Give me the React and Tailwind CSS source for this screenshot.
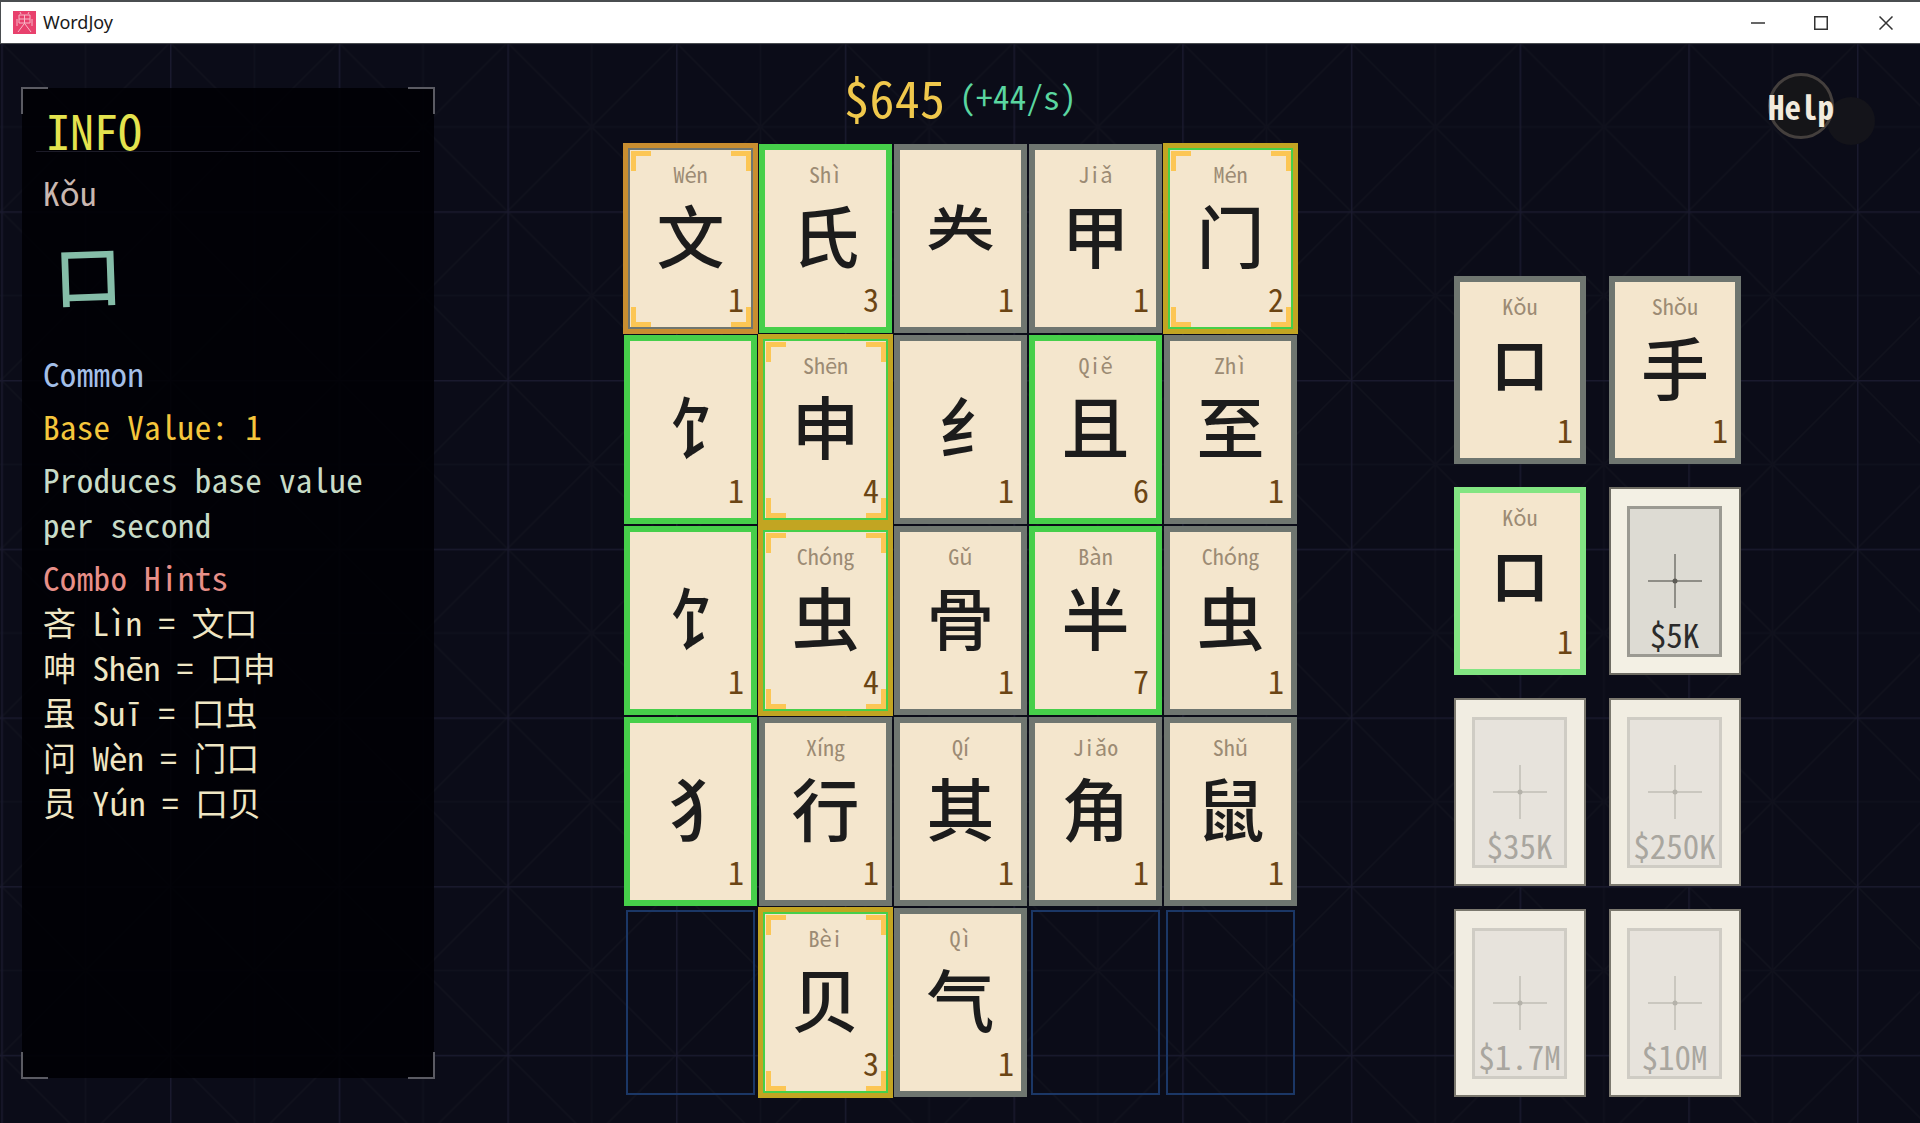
const MONO = "font-['Noto_Sans_Mono_CJK_SC','Noto_Sans_CJK_SC',monospace]";

const rows = [
  [["Wén","文",1,"gold"],["Shì","氏",3,"green"],["","龹",1,"grey"],["Jiǎ","甲",1,"grey"],["Mén","门",2,"both"]],
  [["","饣",1,"green",true],["Shēn","申",4,"both"],["","纟",1,"grey",true],["Qiě","且",6,"green"],["Zhì","至",1,"grey"]],
  [["","饣",1,"green",true],["Chóng","虫",4,"both"],["Gǔ","骨",1,"grey"],["Bàn","半",7,"green"],["Chóng","虫",1,"grey"]],
  [["","犭",1,"green",true],["Xíng","行",1,"grey"],["Qí","其",1,"grey"],["Jiǎo","角",1,"grey"],["Shǔ","鼠",1,"grey"]],
  [null,["Bèi","贝",3,"both"],["Qì","气",1,"grey"],null,null],
];

// ì and ī come from the proportional fallback face; hold them to the half-width cell.
function Py({ text }) {
  return text.split(/([ìī])/).map((part, i) =>
    part === "ì" || part === "ī" ? (
      <span key={i} className="inline-block w-[0.5em] text-center">{part}</span>
    ) : (
      part
    )
  );
}

function Brackets() {
  const arm = "absolute bg-[#fcc654]";
  return (
    <div className="absolute left-[7px] right-[6px] top-[7px] bottom-[6px]">
      <div className={`${arm} left-0 top-0 w-5 h-[5px]`} />
      <div className={`${arm} left-0 top-0 w-[5px] h-5`} />
      <div className={`${arm} right-0 top-0 w-5 h-[5px]`} />
      <div className={`${arm} right-0 top-0 w-[5px] h-5`} />
      <div className={`${arm} left-0 bottom-0 w-5 h-[5px]`} />
      <div className={`${arm} left-0 bottom-0 w-[5px] h-5`} />
      <div className={`${arm} right-0 bottom-0 w-5 h-[5px]`} />
      <div className={`${arm} right-0 bottom-0 w-[5px] h-5`} />
    </div>
  );
}

function Card({ py, ch, n, kind, radical, small }) {
  const border =
    kind === "green" || kind === "both"
      ? "border-[#46cf4a]"
      : kind === "light"
      ? "border-[#82e582]"
      : "border-[#6f7670]";
  const glyph = small
    ? "text-[56px] leading-[76px] -translate-y-[4px] font-semibold"
    : radical
    ? "text-[68px] leading-[76px] translate-x-[12px] font-medium"
    : "text-[68px] leading-[76px] font-medium";
  return (
    <div className={`relative border-[6px] ${border} bg-[#f4e6cd] ${MONO} flex flex-col items-center`}>
      <div className="h-[46px] pt-[8px] text-[22px] leading-[30px] text-[#9c8b74]"><Py text={py} /></div>
      <div className={`${glyph} text-[#1c1c1c] font-['Noto_Sans_CJK_SC',sans-serif]`}>{ch}</div>
      <div className="absolute right-[7px] bottom-[11px] text-[32px] leading-[36px] text-[#6b4514]">{n}</div>
      {kind === "gold" && <div className="absolute -inset-[7px] border-[5px] border-[#c98e30]" />}
      {kind === "both" && <div className="absolute -inset-[7px] border-[5px] border-[#c2a522]" />}
      {(kind === "gold" || kind === "both") && (
        <div className="absolute -inset-[6px]"><Brackets /></div>
      )}
    </div>
  );
}

function Slot({ price, active }) {
  return (
    <div className={`${active ? "border-[#6e6c63] bg-[#f3f0e4]" : "border-[#7b786e] bg-[#f1ede2]"} border-2 pt-[17px] pr-px flex justify-center ${MONO}`}>
      <div className={`${active ? "border-[#9b9a92] bg-[#dddbd3]" : "border-[#cfccc4] bg-[#e7e3dc]"} border-[3px] w-[95px] h-[151px] flex flex-col items-center`}>
        <svg width="54" height="54" viewBox="0 0 54 54" className="mt-[45px] shrink-0">
          <g stroke={active ? "#8f8e87" : "#cac7bf"} strokeWidth="2">
            <path d="M27 0V54M0 27H54" />
          </g>
          <circle cx="27" cy="27" r="2.5" fill={active ? "#5c5b55" : "#b5b2aa"} />
        </svg>
        <div className={`mt-[6px] text-[33px] leading-[40px] slashed-zero ${active ? "text-[#2b2b2b]" : "text-[#a9a69f]"}`}>{price}</div>
      </div>
    </div>
  );
}

function Corner({ cls }) {
  return <div className={`absolute w-[27px] h-[27px] border-[#5b5b63] ${cls}`} />;
}

function Backdrop() {
  return (
    <svg className="absolute inset-0 w-full h-full" xmlns="http://www.w3.org/2000/svg">
      <defs>
        <pattern id="tile" x="1.3" y="-1.4" width="168.7" height="168.7" patternUnits="userSpaceOnUse">
          <path d="M0 0L168.7 168.7M168.7 0L0 168.7" stroke="#11121d" strokeWidth="1.5" fill="none" />
          <path d="M84.35 0V168.7M0 84.35H168.7" stroke="#10111d" strokeWidth="1.5" fill="none" />
          <path d="M0 0V168.7M0 0H168.7" stroke="#1a1a2e" strokeWidth="3" fill="none" />
        </pattern>
      </defs>
      <rect width="100%" height="100%" fill="url(#tile)" />
    </svg>
  );
}

export default function App() {
  return (
    <div className="w-[1920px] h-[1123px] flex flex-col overflow-hidden bg-[#0b0c18]">
      <div className="h-[44px] shrink-0 flex items-center bg-white border-t-2 border-l border-b border-[#4a4d50] pl-[12px]">
        <svg width="23" height="23" viewBox="0 0 23 23" className="shrink-0">
          <rect width="23" height="23" fill="#e8416d" />
          <path d="M8 3L7 1M15 3L16 1M6 4H17V12H6ZM6 8H17M11.5 4V13M11 13L5 21M12 13L18 21M4 8V15M19 8V15" stroke="#f7b9c8" strokeWidth="1" fill="none" />
        </svg>
        <span className="ml-[7px] text-[18px] text-[#1a1a1a] font-['Noto_Sans',sans-serif]">WordJoy</span>
        <div className="ml-auto flex items-center">
          <svg width="14" height="14" viewBox="0 0 14 14" className="mr-[49px]"><path d="M0 7H14" stroke="#333" strokeWidth="1.5" /></svg>
          <svg width="14" height="14" viewBox="0 0 14 14" className="mr-[51px]"><rect x=".75" y=".75" width="12.5" height="12.5" fill="none" stroke="#333" strokeWidth="1.5" /></svg>
          <svg width="14" height="14" viewBox="0 0 14 14" className="mr-[27px]"><path d="M.5.5L13.5 13.5M13.5.5L.5 13.5" stroke="#333" strokeWidth="1.5" /></svg>
        </div>
      </div>

      <div className="relative flex-1 flex">
        <Backdrop />

        <aside className={`relative ml-[22px] mt-[44px] w-[412px] h-[990px] bg-[#000004]/90 px-[21px] shrink-0 tracking-[0.35px] ${MONO}`}>
          <Corner cls="-left-px -top-px border-l-2 border-t-2" />
          <Corner cls="-right-px -top-px border-r-2 border-t-2" />
          <Corner cls="-left-px -bottom-px border-l-2 border-b-2" />
          <Corner cls="-right-px -bottom-px border-r-2 border-b-2" />

          <div className="h-[64px] -mx-[7px] border-b border-[#1c1b28] pl-[10px] pt-[11px] text-[48px] leading-[60px] tracking-normal text-[#e4e34e]">INFO</div>
          <div className="mt-[18px] text-[33px] leading-[45px] text-[#c9b7b0]">Kǒu</div>
          <div className="h-[136px] pl-[11px] pt-[16px] text-[68px] leading-[84px] font-medium text-[#85bda8] font-['Noto_Sans_CJK_SC',sans-serif]">
            <span className="inline-block -rotate-2">口</span>
          </div>
          <div className="text-[33px] leading-[45px] text-[#a3bfe8]">Common</div>
          <div className="mt-[8px] text-[33px] leading-[45px] text-[#f5c63c]">Base Value: 1</div>
          <div className="mt-[8px] text-[33px] leading-[45px] text-[#c8dcc8] w-[345px]">Produces base value per second</div>
          <div className="mt-[8px] text-[33px] leading-[45px] text-[#e88f88]">Combo Hints</div>
          <div className="text-[33px] leading-[45px] tracking-normal text-[#efe6c4]">
            <div>吝 <Py text="Lìn" /> = 文口</div>
            <div>呻 Shēn = 口申</div>
            <div>虽 <Py text="Suī" /> = 口虫</div>
            <div>问 Wèn = 门口</div>
            <div>员 Yún = 口贝</div>
          </div>
        </aside>

        <main className={`relative ml-[190px] w-[673px] shrink-0 ${MONO}`}>
          <div className="h-[100px] flex items-center justify-center gap-[14px] pt-[4px]">
            <span className="text-[50px] leading-[64px] tracking-[0.3px] text-[#f0c84c]">$645</span>
            <span className="text-[33px] leading-[64px] tracking-[0.3px] text-[#5ad6a0]">(+44/s)</span>
          </div>
          <div className="grid grid-cols-[repeat(5,133px)] auto-rows-[189px] gap-[2px]">
            {rows.flat().map((c, i) =>
              c ? (
                <Card key={i} py={c[0]} ch={c[1]} n={c[2]} kind={c[3]} radical={c[4]} />
              ) : (
                <div key={i} className="m-[2px] border-2 border-[#1b3766]" />
              )
            )}
          </div>
        </main>

        <section className="relative ml-[157px] mt-[232px] grid grid-cols-[repeat(2,132px)] auto-rows-[188px] gap-[23px] self-start">
          <Card py="Kǒu" ch="口" n={1} kind="grey" small />
          <Card py="Shǒu" ch="手" n={1} kind="grey" />
          <Card py="Kǒu" ch="口" n={1} kind="light" small />
          <Slot price="$5K" active />
          <Slot price="$35K" />
          <Slot price="$250K" />
          <Slot price="$1.7M" />
          <Slot price="$10M" />
        </section>

        <div className="absolute left-[1827px] top-[53px] w-[48px] h-[48px] rounded-full bg-[#14141a]" />
        <div className={`absolute left-[1768px] top-[29px] w-[66px] h-[66px] rounded-full border-[3px] border-[#443f3d] bg-[#151518] flex items-center justify-center ${MONO}`}>
          <span className="text-[33px] font-bold text-[#f2eadd] leading-none">Help</span>
        </div>
      </div>
    </div>
  );
}
